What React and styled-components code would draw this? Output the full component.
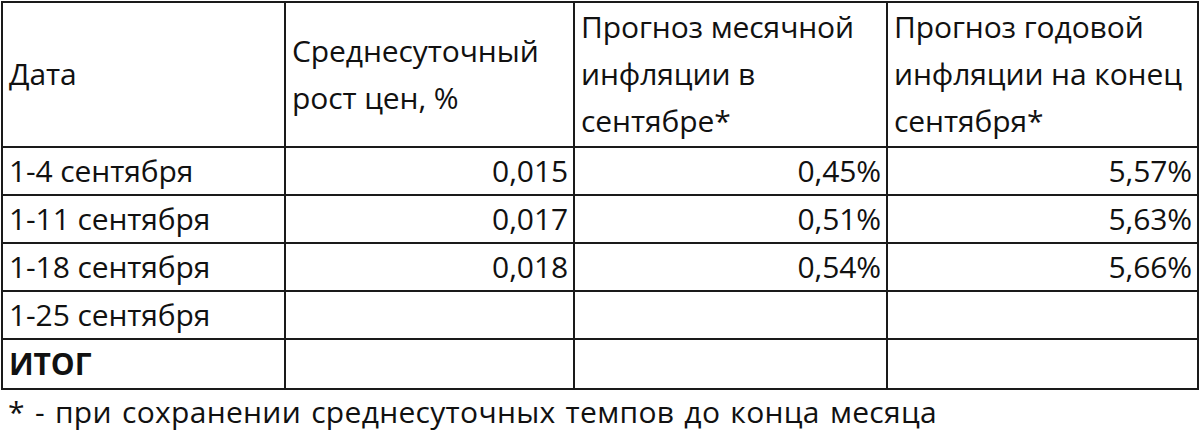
import styled, { createGlobalStyle } from "styled-components";

const GlobalStyle = createGlobalStyle`
  html, body {
    margin: 0;
    padding: 0;
    background: #ffffff;
  }
  body {
    font-family: "Open Sans", "Noto Sans", sans-serif;
    color: #111111;
  }
`;

const Page = styled.div`
  width: 1200px;
  height: 437px;
  padding: 1px 0 0 1px;
  box-sizing: border-box;
  overflow: hidden;
`;

const Table = styled.table`
  border-collapse: collapse;
  table-layout: fixed;
  width: 1196px;
  font-size: 30px;
  letter-spacing: -0.1px;
`;

const Cell = styled.td`
  border: 2px solid #1a1a1a;
  padding: 0 5px 0 6px;
  height: ${({ $h }) => $h || 46}px;
  text-align: ${({ $right }) => ($right ? "right" : "left")};
  font-weight: ${({ $bold }) => ($bold ? 700 : 400)};
  vertical-align: middle;
  line-height: 46px;
  white-space: nowrap;
  box-sizing: border-box;
`;

const HeadCell = styled(Cell)`
  line-height: 47px;
  padding-bottom: 2px;
`;

const Note = styled.div`
  font-size: 30px;
  word-spacing: 2px;
  letter-spacing: 0.3px;
  padding: 0 0 0 7px;
  line-height: 44px;
  white-space: nowrap;
`;

const rows = [
  ["1-4 сентября", "0,015", "0,45%", "5,57%"],
  ["1-11 сентября", "0,017", "0,51%", "5,63%"],
  ["1-18 сентября", "0,018", "0,54%", "5,66%"],
  ["1-25 сентября", "", "", ""],
];

export default function App() {
  return (
    <Page>
      <GlobalStyle />
      <Table>
        <colgroup>
          <col style={{ width: 283 }} />
          <col style={{ width: 289 }} />
          <col style={{ width: 313 }} />
          <col style={{ width: 311 }} />
        </colgroup>
        <tbody>
          <tr>
            <HeadCell $h={145}>Дата</HeadCell>
            <HeadCell $h={145}>
              Среднесуточный
              <br />
              рост цен, %
            </HeadCell>
            <HeadCell $h={145}>
              Прогноз месячной
              <br />
              инфляции в
              <br />
              сентябре*
            </HeadCell>
            <HeadCell $h={145}>
              Прогноз годовой
              <br />
              инфляции на конец
              <br />
              сентября*
            </HeadCell>
          </tr>
          {rows.map((r) => (
            <tr key={r[0]}>
              <Cell $h={48}>{r[0]}</Cell>
              <Cell $h={48} $right>{r[1]}</Cell>
              <Cell $h={48} $right>{r[2]}</Cell>
              <Cell $h={48} $right>{r[3]}</Cell>
            </tr>
          ))}
          <tr>
            <Cell $h={50} $bold>ИТОГ</Cell>
            <Cell $h={50} />
            <Cell $h={50} />
            <Cell $h={50} />
          </tr>
        </tbody>
      </Table>
      <Note>* - при сохранении среднесуточных темпов до конца месяца</Note>
    </Page>
  );
}
